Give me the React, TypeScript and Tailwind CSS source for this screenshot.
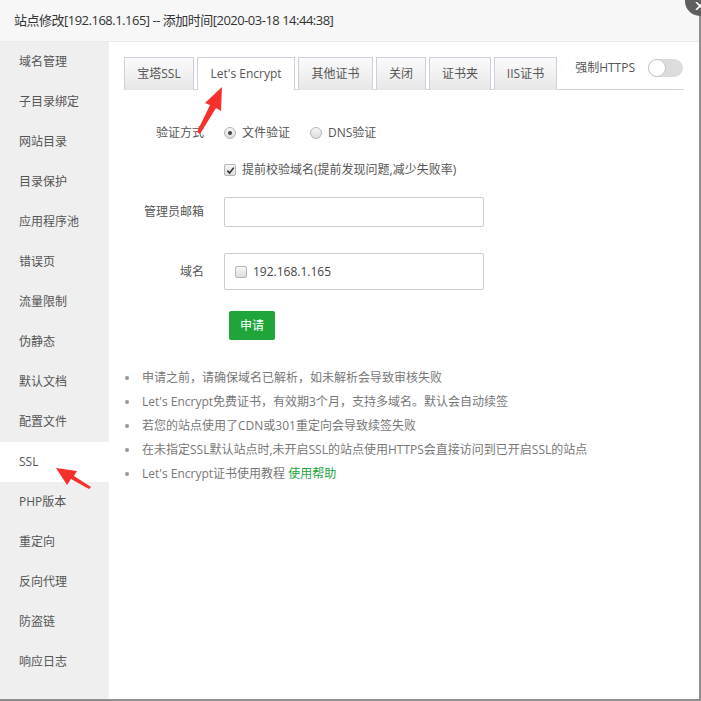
import React from 'react';

const MENU = [
  '域名管理', '子目录绑定', '网站目录', '目录保护', '应用程序池', '错误页', '流量限制', '伪静态',
  '默认文档', '配置文件', 'SSL', 'PHP版本', '重定向', '反向代理', '防盗链', '响应日志',
];

// width of each tab, taken from the screenshot
const TABS = [
  { name: '宝塔SSL', w: 'w-[70px]' },
  { name: "Let's Encrypt", w: 'w-[98px]', active: true },
  { name: '其他证书', w: 'w-[75px]' },
  { name: '关闭', w: 'w-[50px]' },
  { name: '证书夹', w: 'w-[62px]' },
  { name: 'IIS证书', w: 'w-[63px]' },
];

const TIPS = [
  '申请之前，请确保域名已解析，如未解析会导致审核失败',
  "Let's Encrypt免费证书，有效期3个月，支持多域名。默认会自动续签",
  '若您的站点使用了CDN或301重定向会导致续签失败',
  '在未指定SSL默认站点时,未开启SSL的站点使用HTTPS会直接访问到已开启SSL的站点',
];

const Check = ({ checked }: { checked?: boolean }) => (
  <span className="flex h-[12px] w-[12px] items-center justify-center rounded-[2px] border border-[#b5b5b5] bg-gradient-to-b from-[#f6f6f6] to-[#dedede]">
    {checked && (
      <svg width="9" height="9" viewBox="0 0 10 10">
        <path d="M1.5 5.2 L4 7.8 L8.6 1.8" fill="none" stroke="#333" strokeWidth="1.8" />
      </svg>
    )}
  </span>
);

const Radio = ({ checked }: { checked?: boolean }) => (
  <span className="flex h-[12px] w-[12px] items-center justify-center rounded-full border border-[#b5b5b5] bg-gradient-to-b from-[#f6f6f6] to-[#dcdcdc]">
    {checked && <span className="h-[4px] w-[4px] rounded-full bg-[#444]" />}
  </span>
);

export default function App() {
  return (
    <div className="relative h-[701px] w-[701px] overflow-hidden bg-[#8e8e8e] font-['Open_Sans','Noto_Sans_CJK_SC',sans-serif]">
      <div className="flex h-[699px] w-[699px] flex-col bg-white">
        {/* title bar */}
        <div className="flex h-[42px] shrink-0 items-center border-b border-[#eaeaea] bg-[#f7f7f7] pl-[14px] text-[13px] tracking-[-0.5px] text-[#333]">
          站点修改[192.168.1.165] -- 添加时间[2020-03-18 14:44:38]
        </div>

        <div className="flex min-h-0 flex-1">
          {/* side menu */}
          <div className="w-[109px] shrink-0 bg-[#efefef]">
            {MENU.map((m) => (
              <div
                key={m}
                className={`flex h-[40px] items-center pl-[19px] text-[12px] text-[#555] ${m === 'SSL' ? 'bg-white' : ''}`}
              >
                {m}
              </div>
            ))}
          </div>

          {/* main panel */}
          <div className="flex-1 px-[15px] pt-[15px] text-[12px] text-[#555]">
            <div className="flex items-start border-b border-[#d3d3e0]">
              <div className="flex gap-[3px]">
                {TABS.map((t) => (
                  <div
                    key={t.name}
                    className={`${t.w} -mb-px flex h-[33px] items-center justify-center border border-b-0 border-[#cfcfdc] text-[12px] text-[#555] ${
                      t.active ? 'bg-white' : 'bg-gradient-to-b from-[#fbfbfb] to-[#e7e7e7]'
                    }`}
                  >
                    {t.name}
                  </div>
                ))}
              </div>
              <div className="ml-auto mt-[2px] flex h-[18px] items-center gap-[13px] pr-px">
                <span className="text-[12px] text-[#555]">强制HTTPS</span>
                <span className="flex h-[18px] w-[35px] items-center rounded-full bg-[#dcdcdc]">
                  <span className="h-[18px] w-[18px] rounded-full border border-[#c4c4c4] bg-white" />
                </span>
              </div>
            </div>

            {/* form */}
            <div className="mt-[33px] flex h-[20px] items-center">
              <div className="w-[80px] text-right">验证方式</div>
              <div className="ml-[20px] flex items-center">
                <Radio checked />
                <span className="ml-[6px]">文件验证</span>
                <span className="ml-[20px]"><Radio /></span>
                <span className="ml-[6px]">DNS验证</span>
              </div>
            </div>

            <div className="mt-[17px] flex h-[20px] items-center pl-[100px]">
              <Check checked />
              <span className="ml-[6px]">提前校验域名(提前发现问题,减少失败率)</span>
            </div>

            <div className="mt-[17px] flex items-center">
              <div className="w-[80px] text-right">管理员邮箱</div>
              <div className="ml-[20px] h-[30px] w-[260px] rounded-[2px] border border-[#ccc]" />
            </div>

            <div className="mt-[26px] flex items-center">
              <div className="w-[80px] text-right">域名</div>
              <div className="ml-[20px] flex h-[37px] w-[260px] items-center rounded-[2px] border border-[#ccc] pl-[10px]">
                <Check />
                <span className="ml-[6px] text-[12px] text-[#444]">192.168.1.165</span>
              </div>
            </div>

            <div className="mt-[21px] pl-[105px]">
              <button className="flex h-[29px] w-[46px] items-center justify-center rounded-[2px] bg-[#20a53a] text-[12px] text-white">
                申请
              </button>
            </div>

            <ul className="mt-[26px]">
              {TIPS.map((t) => (
                <li key={t} className="flex h-[24px] items-center text-[12px] text-[#777]">
                  <span className="ml-px h-[4px] w-[4px] rounded-full bg-[#999]" />
                  <span className="ml-[13px]">{t}</span>
                </li>
              ))}
              <li className="flex h-[24px] items-center text-[12px] text-[#777]">
                <span className="ml-px h-[4px] w-[4px] rounded-full bg-[#999]" />
                <span className="ml-[13px]">
                  Let's Encrypt证书使用教程 <span className="text-[#20a53a]">使用帮助</span>
                </span>
              </li>
            </ul>
          </div>
        </div>
      </div>

      {/* close button of the dialog */}
      <div className="absolute left-[685px] top-[-14px] flex h-[30px] w-[30px] items-end justify-center rounded-full bg-[#5f5f5f] pb-[6px]">
        <svg width="10" height="8" viewBox="0 0 10 8">
          <path d="M1 0 L9 8 M9 0 L1 8" stroke="#fff" strokeWidth="1.6" />
        </svg>
      </div>

      {/* red annotation arrows */}
      <svg className="pointer-events-none absolute left-0 top-0" width="701" height="701">
        <polygon
          points="222,87 221,111 216,108 200,134 197,132 210,105 205,103"
          fill="#f8302c"
        />
        <polygon
          points="56,468 77,471 74,476 91,487 89,489 71,479 67,485"
          fill="#f8302c"
        />
      </svg>
    </div>
  );
}
